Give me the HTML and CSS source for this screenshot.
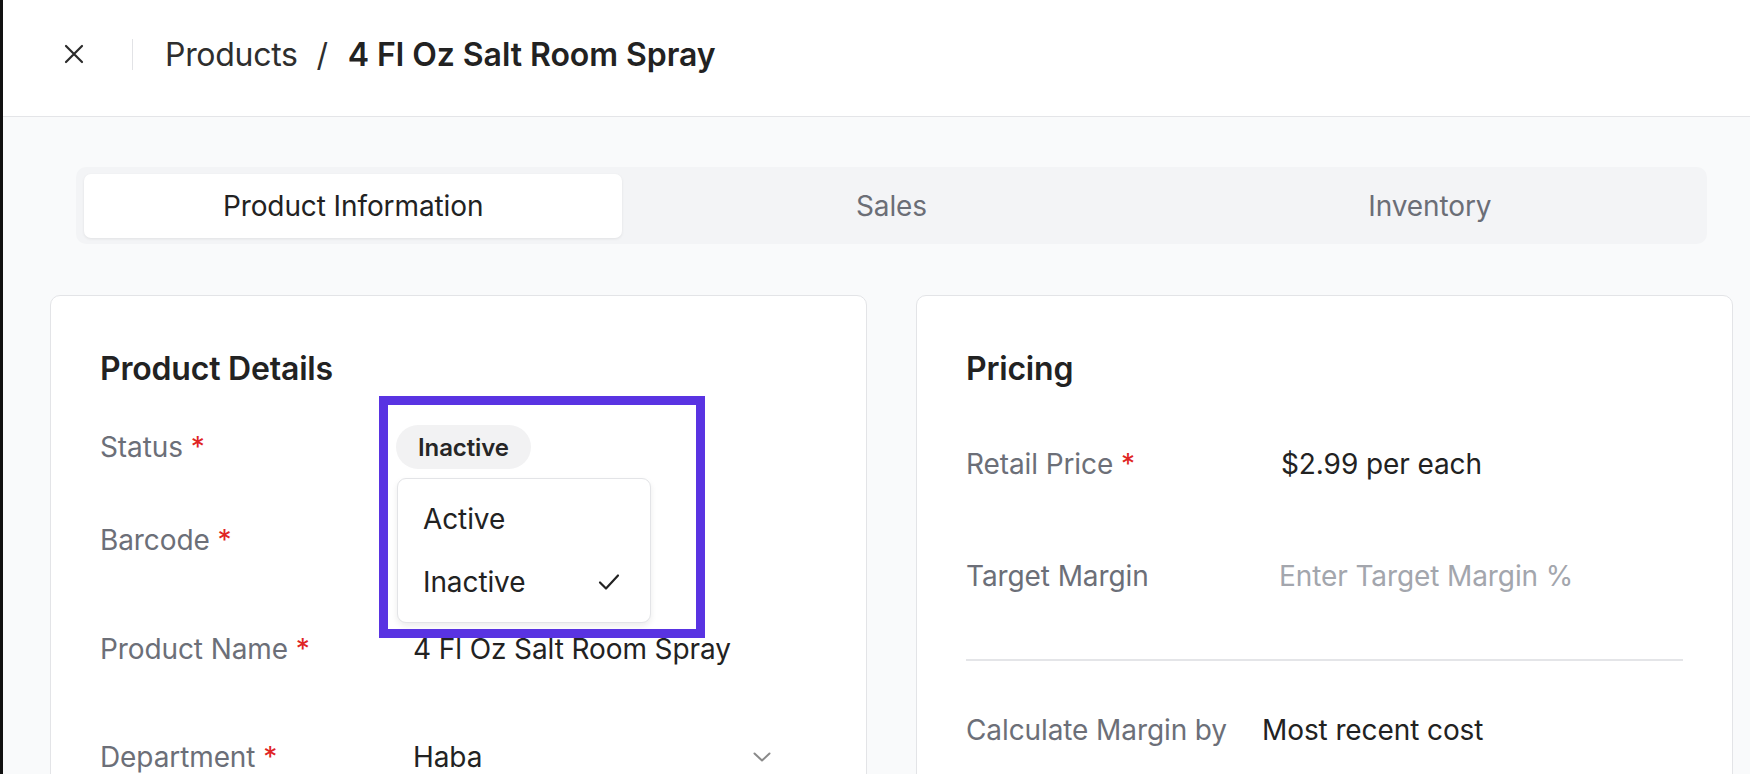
FILE: index.html
```html
<!DOCTYPE html>
<html lang="en">
<head>
<meta charset="utf-8">
<title>Products / 4 Fl Oz Salt Room Spray</title>
<link rel="stylesheet" href="styles.css">
</head>
<body>
<header class="topbar">
  <button class="close-btn" aria-label="Close">
    <svg width="20" height="20" viewBox="0 0 20 20" fill="none" stroke="#2b2b2b" stroke-width="2.2" stroke-linecap="round"><path d="M2 2 L18 18 M18 2 L2 18"/></svg>
  </button>
  <span class="vsep"></span>
  <nav class="crumbs">
    <span class="crumb">Products</span>
    <span class="slash">/</span>
    <span class="crumb current">4 Fl Oz Salt Room Spray</span>
  </nav>
</header>

<main class="page">
  <div class="tabs">
    <div class="tab active">Product Information</div>
    <div class="tab">Sales</div>
    <div class="tab">Inventory</div>
  </div>

  <div class="cards">
    <section class="card">
      <h2 class="card-title">Product Details</h2>
      <div class="row row-status">
        <div class="label">Status <span class="req">*</span></div>
        <div class="value"><span class="pill">Inactive</span></div>
      </div>
      <div class="row">
        <div class="label">Barcode <span class="req">*</span></div>
        <div class="value"></div>
      </div>
      <div class="row">
        <div class="label">Product Name <span class="req">*</span></div>
        <div class="value">4 Fl Oz Salt Room Spray</div>
      </div>
      <div class="row">
        <div class="label">Department <span class="req">*</span></div>
        <div class="value select">
          <span>Haba</span>
          <svg class="chev" width="18" height="10" viewBox="0 0 18 10" fill="none" stroke="#8a8a8a" stroke-width="2" stroke-linecap="round" stroke-linejoin="round"><path d="M1.5 1.5 L9 8.5 L16.5 1.5"/></svg>
        </div>
      </div>

      <div class="menu">
        <div class="menu-item">Active</div>
        <div class="menu-item">Inactive
          <svg width="22" height="18" viewBox="0 0 22 18" fill="none" stroke="#222" stroke-width="2.2" stroke-linecap="round" stroke-linejoin="round"><path d="M2 9.5 L8 15.5 L20 2.5"/></svg>
        </div>
      </div>
      <div class="highlight"></div>
    </section>

    <section class="card">
      <h2 class="card-title">Pricing</h2>
      <div class="row row-price">
        <div class="label">Retail Price <span class="req">*</span></div>
        <div class="value">$2.99 per each</div>
      </div>
      <div class="row row-price">
        <div class="label">Target Margin</div>
        <div class="value placeholder">Enter Target Margin %</div>
      </div>
      <hr class="divider">
      <div class="row row-calc">
        <div class="label">Calculate Margin by</div>
        <div class="value">Most recent cost</div>
      </div>
    </section>
  </div>
</main>
</body>
</html>
```

FILE: styles.css
```css
* { box-sizing: border-box; }

html, body {
  margin: 0;
  height: 100%;
}

body {
  font-family: Inter, "Noto Sans", "Liberation Sans", sans-serif;
  background: #f9fafb;
  color: #1f1f1f;
  border-left: 3px solid #111;
  overflow: hidden;
}

.topbar {
  height: 117px;
  background: #fff;
  border-bottom: 1px solid #e4e5e8;
  display: flex;
  align-items: center;
  padding-left: 61px;
  padding-bottom: 8px;
}

.close-btn {
  border: 0;
  background: none;
  padding: 0;
  width: 20px;
  height: 20px;
  display: flex;
}

.vsep {
  width: 1px;
  height: 31px;
  background: #e2e3e6;
  margin-left: 48px;
}

.crumbs {
  margin-left: 32px;
  display: flex;
  align-items: baseline;
  font-size: 32px;
  letter-spacing: -0.3px;
}

.crumb { color: #2e2e2e; }
.slash { color: #2e2e2e; margin: 0 20px 0 19px; }
.crumb.current { font-weight: 600; color: #222; letter-spacing: -0.05px; }

.page {
  padding: 50px 17px 0 47px;
}

.tabs {
  margin: 0 26px;
  background: #f3f4f6;
  border-radius: 10px;
  padding: 7px 8px 6px 8px;
  display: grid;
  grid-template-columns: 1fr 1fr 1fr;
}

.tab {
  height: 64px;
  display: flex;
  align-items: center;
  justify-content: center;
  font-size: 28px;
  letter-spacing: -0.1px;
  color: #6b6e76;
  border-radius: 7px;
}

.tab.active {
  background: #fff;
  color: #222;
  box-shadow: 0 1px 3px rgba(0, 0, 0, 0.08);
}

.cards {
  margin-top: 51px;
  display: grid;
  grid-template-columns: 817px 817px;
  gap: 49px;
}

.card {
  position: relative;
  background: #fff;
  border: 1px solid #e3e4e7;
  border-radius: 10px;
  padding: 54px 49px 40px 49px;
  min-height: 520px;
}

.card-title {
  margin: 0 0 20px 0;
  font-size: 32px;
  line-height: 38px;
  font-weight: 600;
  color: #222;
  letter-spacing: -0.2px;
}

.row {
  display: grid;
  grid-template-columns: 313px 1fr;
  align-items: center;
  height: 108.5px;
  font-size: 28px;
  letter-spacing: -0.1px;
}

.row-status { height: 78px; }
.row-price { height: 112px; grid-template-columns: 315px 1fr; }
.row-calc { height: 80px; grid-template-columns: 296px 1fr; }

.label { color: #6c6f78; }
.req { color: #e02424; }
.value { color: #222; }
.placeholder { color: #a3a6ad; margin-left: -2px; }

.select {
  display: flex;
  align-items: center;
  justify-content: space-between;
  padding-right: 46px;
}

.pill {
  display: inline-flex;
  align-items: center;
  height: 44px;
  padding: 0 22px;
  margin-left: -17px;
  border-radius: 22px;
  background: #f2f2f3;
  font-size: 24px;
  font-weight: 600;
  color: #262626;
}

.divider {
  border: 0;
  height: 2px;
  background: #e4e5e8;
  margin: 27px 0 29px 0;
}

.menu {
  position: absolute;
  left: 346px;
  top: 182px;
  width: 254px;
  height: 145px;
  background: #fff;
  border: 1px solid #e3e4e7;
  border-radius: 9px;
  box-shadow: 0 3px 6px rgba(0, 0, 0, 0.08);
  padding: 8px 0 10px 0;
}

.menu-item {
  height: 63px;
  display: flex;
  align-items: center;
  justify-content: space-between;
  padding: 0 30px 0 25px;
  font-size: 28px;
  letter-spacing: -0.1px;
  color: #222;
}

.highlight {
  position: absolute;
  left: 328px;
  top: 100px;
  width: 326px;
  height: 242px;
  border: 9px solid #5933e2;
  pointer-events: none;
}
```
